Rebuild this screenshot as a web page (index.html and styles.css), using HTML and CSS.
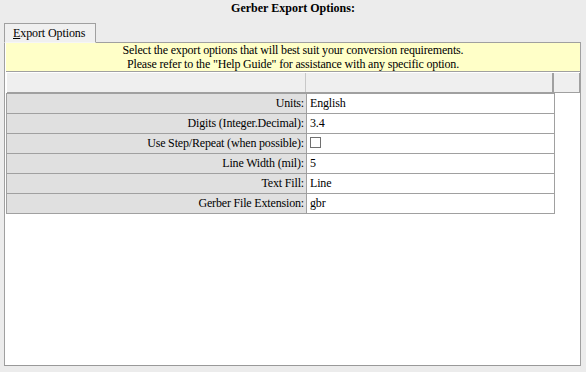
FILE: index.html
```html
<!DOCTYPE html>
<html>
<head>
<meta charset="utf-8">
<title>Gerber Export Options</title>
<link rel="stylesheet" href="styles.css">
</head>
<body>
<div class="title">Gerber Export Options:</div>
<div class="tabs">
  <div class="tab"><u>E</u>xport Options</div>
</div>
<div class="panel">
  <div class="notice">Select the export options that will best suit your conversion requirements.<br>Please refer to the "Help Guide" for assistance with any specific option.</div>
  <div class="head">
    <div class="hc hc-label"></div>
    <div class="hc hc-value"></div>
    <div class="hc hc-extra"></div>
  </div>
  <div class="opts">
    <div class="lbl">Units:</div><div class="val">English</div>
    <div class="lbl">Digits (Integer.Decimal):</div><div class="val">3.4</div>
    <div class="lbl">Use Step/Repeat (when possible):</div><div class="val"><span class="check"></span></div>
    <div class="lbl">Line Width (mil):</div><div class="val">5</div>
    <div class="lbl">Text Fill:</div><div class="val">Line</div>
    <div class="lbl">Gerber File Extension:</div><div class="val">gbr</div>
  </div>
</div>
</body>
</html>
```
FILE: styles.css
```css
html, body {
  margin: 0;
  padding: 0;
  background: #ececec;
  font-family: "Liberation Serif", "Times New Roman", serif;
  font-size: 12px;
  color: #000;
}

.title {
  height: 23px;
  box-sizing: border-box;
  padding-top: 1px;
  line-height: 14px;
  text-align: center;
  font-weight: bold;
}

.tabs {
  display: flex;
  padding-left: 4px;
  height: 19px;
}

.tab {
  position: relative;
  z-index: 1;
  box-sizing: border-box;
  width: 92px;
  height: 20px;
  padding: 2px 0 0 8px;
  line-height: 14px;
  letter-spacing: -0.1px;
  background: #f0f0f0;
  border: 1px solid #a0a0a0;
  border-bottom: 1px solid #f6f6f6;
}

.panel {
  box-sizing: border-box;
  margin: 0 5px 0 4px;
  height: 324px;
  padding-left: 1px;
  background: #fff;
  border: 1px solid #a0a0a0;
  border-bottom-color: #999;
}

.notice {
  height: 28px;
  line-height: 14px;
  text-align: center;
  letter-spacing: -0.17px;
  background: #ffffc8;
  border-bottom: 1px solid #a0a0a0;
}

.head {
  display: flex;
  margin: 1px 0 0 1px;
  height: 20px;
  box-sizing: border-box;
  background: #efefef;
  border-bottom: 1px solid #a0a0a0;
}

.hc {
  box-sizing: border-box;
  border-right: 1px solid #a0a0a0;
}

.hc-label { width: 299px; border-right-color: #c8c8c8; }
.hc-value { width: 248px; border-right-width: 2px; }
.hc-extra { flex: 1; border-right-color: #a0a0a0; }

.opts {
  display: grid;
  grid-template-columns: 300px 248px;
  width: max-content;
  border-left: 1px solid #a0a0a0;
  border-top: 1px solid #a0a0a0;
}

.lbl, .val {
  box-sizing: border-box;
  height: 20px;
  line-height: 19px;
  letter-spacing: -0.17px;
  border-right: 1px solid #a0a0a0;
  border-bottom: 1px solid #a0a0a0;
  white-space: nowrap;
}

.lbl {
  background: #e0e0e0;
  text-align: right;
  padding-right: 2px;
}

.val {
  background: #fff;
  padding-left: 3px;
}

.check {
  display: block;
  width: 11px;
  height: 11px;
  box-sizing: border-box;
  margin-top: 3px;
  border: 1px solid #707070;
  background: #fff;
}
```
